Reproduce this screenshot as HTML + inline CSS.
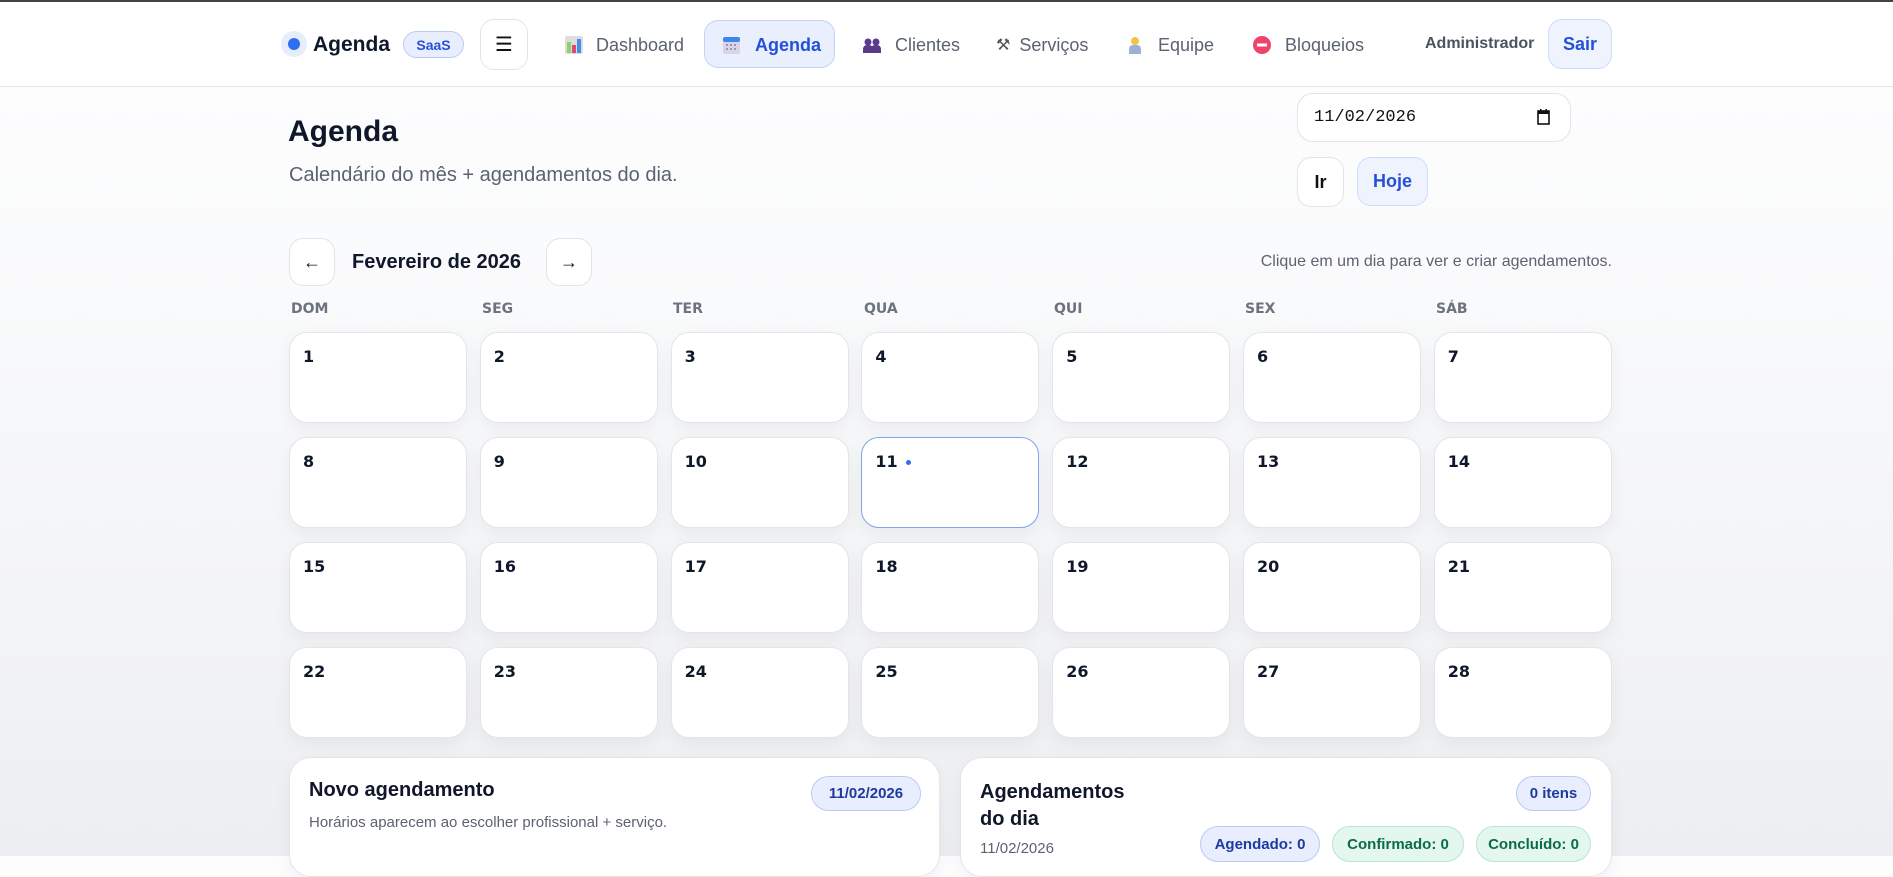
<!DOCTYPE html>
<html><head><meta charset="utf-8"><style>
*{box-sizing:border-box;margin:0;padding:0}
body{width:1893px;height:856px;overflow:hidden;font-family:"Liberation Sans","DejaVu Sans",sans-serif;background:linear-gradient(#fdfdfe 90px,#f9fafb 300px,#f0f1f3 740px,#eceef1 856px);position:relative;color:#0f172a}
.a{position:absolute}
.hdr{left:0;top:0;width:1893px;height:87px;background:#fff;border-top:2px solid #444;border-bottom:1px solid #e3e5e9}
.nav{font-size:18px;color:#5b6270;display:flex;align-items:center;height:30px}
.btn{background:#fff;border:1px solid #e2e4e8;border-radius:14px;display:flex;align-items:center;justify-content:center}
.cell{position:absolute;width:178px;height:91px;background:#fff;border:1px solid #e3e5ea;border-radius:18px;box-shadow:0 6px 18px rgba(15,23,42,.05)}
.cell span{position:absolute;left:13px;top:14px;font-family:"DejaVu Sans",sans-serif;font-weight:bold;font-size:16px;color:#0f172a}
.wd{position:absolute;top:301px;font-family:"DejaVu Sans",sans-serif;font-weight:bold;font-size:14px;color:#6b7280}
.pill{position:absolute;border-radius:18px;display:flex;align-items:center;justify-content:center;font-weight:bold;font-size:15px}
.blue{background:#e8eefd;border:1px solid #b9cbf5;color:#1e3a9e}
.green{background:#e4f7ef;border:1px solid #b7e6cf;color:#0c6b48}
.card{position:absolute;top:757px;height:120px;background:#fff;border:1px solid #e3e5ea;border-radius:22px;box-shadow:0 6px 18px rgba(15,23,42,.05)}
</style></head><body>
<div class="a hdr"></div>
<div class="a" style="left:281px;top:31px;width:26px;height:26px;border-radius:50%;background:#e7edfb"></div>
<div class="a" style="left:288px;top:38px;width:12px;height:12px;border-radius:50%;background:#2f6ef0"></div>
<div class="a" style="left:313px;top:33px;font-weight:bold;font-size:21px;color:#0f172a">Agenda</div>
<div class="a pill blue" style="left:403px;top:31px;width:61px;height:27px;font-size:14px;color:#2850d8">SaaS</div>
<div class="a btn" style="left:480px;top:19px;width:48px;height:51px;font-size:20px;color:#111">☰</div>
<div class="a nav" style="left:565px;top:30px"><svg width="18" height="18" viewBox="0 0 18 18"><rect x="0" y="0" width="18" height="18" rx="2" fill="#ddd"/><rect x="2" y="6" width="4" height="11" fill="#8bd36b"/><rect x="7" y="9" width="4" height="8" fill="#e5457a"/><rect x="12" y="3" width="4" height="14" fill="#3f8ef0"/></svg><span style="margin-left:13px">Dashboard</span></div>
<div class="a" style="left:704px;top:20px;width:131px;height:48px;background:#e9effd;border:1px solid #c2d2f7;border-radius:14px"></div>
<div class="a nav" style="left:723px;top:30px"><svg width="17" height="18" viewBox="0 0 17 18"><rect x="0" y="1" width="17" height="17" rx="2" fill="#d8d5e6"/><rect x="0" y="1" width="17" height="5" rx="2" fill="#3f86ec"/><g fill="#9a97b5"><rect x="3" y="8" width="2" height="2"/><rect x="7" y="8" width="2" height="2"/><rect x="11" y="8" width="2" height="2"/><rect x="3" y="12" width="2" height="2"/><rect x="7" y="12" width="2" height="2"/><rect x="11" y="12" width="2" height="2"/></g></svg><span style="margin-left:15px;font-weight:bold;color:#2450d6">Agenda</span></div>
<div class="a nav" style="left:863px;top:30px"><svg width="18" height="16" viewBox="0 0 18 16"><circle cx="5" cy="5" r="3.5" fill="#5a3a8a"/><circle cx="13" cy="5" r="3.5" fill="#5a3a8a"/><path d="M0 16v-4a4 4 0 0 1 4-4h2a4 4 0 0 1 4 4v4zM8 16v-4a4 4 0 0 1 4-4h2a4 4 0 0 1 4 4v4z" fill="#5a3a8a"/></svg><span style="margin-left:14px">Clientes</span></div>
<div class="a nav" style="left:996px;top:30px"><span style="font-size:16px;color:#555">⚒</span><span style="margin-left:9px">Serviços</span></div>
<div class="a nav" style="left:1128px;top:30px"><svg width="14" height="18" viewBox="0 0 14 18"><circle cx="7" cy="5" r="4" fill="#f3c444"/><path d="M1 18v-5a4 4 0 0 1 4-4h4a4 4 0 0 1 4 4v5z" fill="#9bb2d0"/></svg><span style="margin-left:16px">Equipe</span></div>
<div class="a nav" style="left:1253px;top:30px"><svg width="18" height="18" viewBox="0 0 18 18"><circle cx="9" cy="9" r="9" fill="#f0436a"/><rect x="4" y="7.5" width="10" height="3" fill="#fff"/></svg><span style="margin-left:14px">Bloqueios</span></div>
<div class="a" style="left:1425px;top:35px;font-weight:bold;font-size:16px;color:#4b5260">Administrador</div>
<div class="a" style="left:1548px;top:19px;width:64px;height:50px;background:#eef3fe;border:1px solid #cfdcf8;border-radius:14px;display:flex;align-items:center;justify-content:center;font-weight:bold;font-size:18px;color:#2450d6">Sair</div>

<div class="a" style="left:288px;top:115px;font-weight:bold;font-size:30px;color:#0f172a">Agenda</div>
<div class="a" style="left:289px;top:164px;font-size:20px;color:#5b6270">Calendário do mês + agendamentos do dia.</div>
<div class="a" style="left:1297px;top:93px;width:274px;height:49px;background:#fff;border:1px solid #e2e4e8;border-radius:16px"></div>
<div class="a" style="left:1314px;top:108px;font-family:'Liberation Mono',monospace;font-size:17px;color:#111">11/02/2026</div>
<svg class="a" style="left:1537px;top:109px" width="13" height="16" viewBox="0 0 13 16"><rect x="1" y="2" width="11" height="13" fill="none" stroke="#111" stroke-width="1.6"/><rect x="1" y="2" width="11" height="3" fill="#111"/><rect x="3" y="0" width="1.5" height="3" fill="#111"/><rect x="8.5" y="0" width="1.5" height="3" fill="#111"/></svg>
<div class="a btn" style="left:1297px;top:157px;width:47px;height:50px;font-weight:bold;font-size:18px;color:#111">Ir</div>
<div class="a" style="left:1357px;top:157px;width:71px;height:49px;background:#eef3fe;border:1px solid #cfdcf8;border-radius:14px;display:flex;align-items:center;justify-content:center;font-weight:bold;font-size:18px;color:#2450d6">Hoje</div>

<div class="a btn" style="left:289px;top:238px;width:46px;height:48px;font-size:18px;color:#111">←</div>
<div class="a" style="left:352px;top:251px;font-weight:bold;font-size:20px;color:#0f172a">Fevereiro de 2026</div>
<div class="a btn" style="left:546px;top:238px;width:46px;height:48px;font-size:18px;color:#111">→</div>
<div class="a" style="right:281px;top:253px;font-size:16px;color:#5b6270">Clique em um dia para ver e criar agendamentos.</div>

<div class="wd" style="left:291px">DOM</div><div class="wd" style="left:482px">SEG</div><div class="wd" style="left:673px">TER</div><div class="wd" style="left:864px">QUA</div><div class="wd" style="left:1054px">QUI</div><div class="wd" style="left:1245px">SEX</div><div class="wd" style="left:1436px">SÁB</div>

<div id="cal"></div>
<script>
var h='';for(var i=0;i<28;i++){var c=i%7,r=Math.floor(i/7);var x=289+c*190.8,y=332+r*105;var st=i==10?'border-color:#7fa4f0;':'';h+='<div class="cell" style="left:'+x+'px;top:'+y+'px;'+st+'"><span>'+(i+1)+(i==10?' <b style="display:inline-block;width:5px;height:5px;border-radius:50%;background:#2f6ef0;vertical-align:middle;margin-left:3px"></b>':'')+'</span></div>';}
document.getElementById('cal').innerHTML=h;
</script>

<div class="card" style="left:289px;width:651px"></div>
<div class="a" style="left:309px;top:779px;font-weight:bold;font-size:20px;color:#0f172a">Novo agendamento</div>
<div class="a" style="left:309px;top:814px;font-size:15px;color:#5b6270">Horários aparecem ao escolher profissional + serviço.</div>
<div class="pill blue" style="left:811px;top:776px;width:110px;height:35px">11/02/2026</div>

<div class="card" style="left:960px;width:652px"></div>
<div class="a" style="left:980px;top:779px;font-weight:bold;font-size:20px;line-height:27px;color:#0f172a">Agendamentos<br>do dia</div>
<div class="a" style="left:980px;top:840px;font-size:15px;color:#5b6270">11/02/2026</div>
<div class="pill blue" style="left:1516px;top:776px;width:75px;height:35px">0 itens</div>
<div class="pill blue" style="left:1200px;top:826px;width:120px;height:36px">Agendado: 0</div>
<div class="pill green" style="left:1332px;top:826px;width:132px;height:36px">Confirmado: 0</div>
<div class="pill green" style="left:1476px;top:826px;width:115px;height:36px">Concluído: 0</div>
</body></html>
